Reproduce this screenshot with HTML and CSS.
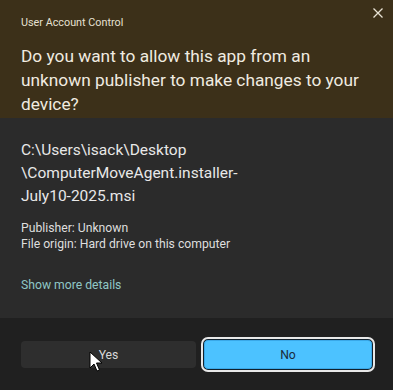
FILE: index.html
```html
<!DOCTYPE html>
<html>
<head>
<meta charset="utf-8">
<link rel="stylesheet" href="styles.css">
</head>
<body>
<div class="dialog">
  <div class="header">
    <div class="topline">
      <span class="app-title">User Account Control</span>
      <svg class="close" width="12" height="12" viewBox="0 0 12 12"><path d="M1.5 1.5 L10.5 10.5 M10.5 1.5 L1.5 10.5" stroke="#e8e2d4" stroke-width="1.3" fill="none"/></svg>
    </div>
    <h1 class="question">Do you want to allow this app from an unknown publisher to make changes to your device?</h1>
  </div>
  <div class="body">
    <div class="path">C:\Users\isack\Desktop<br>\ComputerMoveAgent.installer-<br>July10-2025.msi</div>
    <div class="meta">
      <div>Publisher: Unknown</div>
      <div>File origin: Hard drive on this computer</div>
    </div>
    <div class="more">Show more details</div>
  </div>
  <div class="footer">
    <button class="btn yes">Yes</button>
    <button class="btn no">No</button>
  </div>
  <svg class="cursor" width="14" height="22" viewBox="0 0 14 22"><path d="M1 1 L1 17 L5 13 L8 20 L10.5 19 L7.5 12 L13 12 Z" fill="#ffffff" stroke="#000" stroke-width="1"/></svg>
</div>
</body>
</html>
```
FILE: styles.css
```css
html, body {
  margin: 0;
  padding: 0;
  background: #1c1c1c;
}
body {
  width: 393px;
  height: 390px;
  overflow: hidden;
  font-family: Roboto, "Noto Sans", sans-serif;
}
.dialog {
  position: relative;
  width: 393px;
  height: 390px;
  display: flex;
  flex-direction: column;
  background: #2b2b2b;
}
.header {
  background: #3c3019;
  height: 118px;
  box-sizing: border-box;
  padding: 14px 14px 0 21px;
}
.topline {
  display: flex;
  justify-content: space-between;
  align-items: flex-start;
}
.app-title {
  color: #e6e0d2;
  font-size: 10.8px;
  margin-top: 2px;
}
.close {
  margin-top: -7px;
  margin-right: -5px;
}
.question {
  margin: 15px 0 0 0;
  color: #f0ebe0;
  font-weight: normal;
  font-size: 17.3px;
  line-height: 24px;
}
.body {
  background: #2b2b2b;
  height: 200px;
  box-sizing: border-box;
  padding: 21px 21px 0 21px;
  color: #e8e8e8;
}
.path {
  font-size: 15.5px;
  line-height: 23px;
}
.meta {
  margin-top: 12px;
  font-size: 12.2px;
  line-height: 16px;
  color: #dedede;
}
.more {
  margin-top: 26px;
  font-size: 12.2px;
  color: #8fc7c6;
}
.footer {
  flex: 1;
  background: #202020;
  display: flex;
  gap: 7px;
  padding: 21px 20px 0 21px;
  align-items: flex-start;
}
.btn {
  font-family: inherit;
  font-size: 12.2px;
  height: 27px;
  border-radius: 4px;
  border: none;
  padding: 0;
}
.yes {
  width: 175px;
  margin-top: 2px;
  background: #2e2e2e;
  color: #d8d8d8;
}
.no {
  flex: 1;
  height: 31px;
  background: #4cc2ff;
  color: #1a2b3a;
  border: 1px solid #10202c;
  outline: 2px solid #e8e8e8;
  outline-offset: 0;
  border-radius: 5px;
  box-shadow: inset 0 0 0 1px #3aa8e8;
}
.cursor {
  position: absolute;
  left: 89px;
  top: 351px;
}
```
